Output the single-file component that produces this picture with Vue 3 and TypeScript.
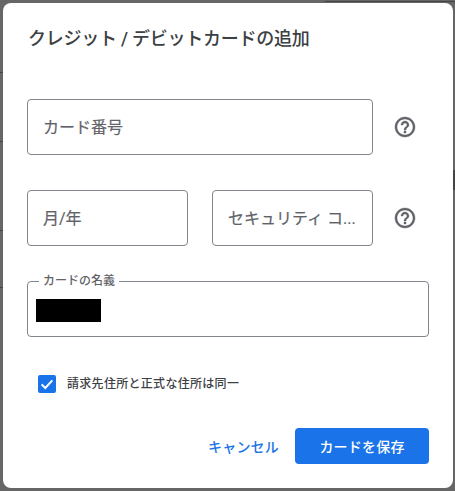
<script setup lang="ts">
const title = 'クレジット / デビットカードの追加'
</script>

<template>
  <div class="backdrop">
    <div class="dialog">
      <h2 class="title">{{ title }}</h2>

      <div class="row row-number">
        <div class="field grow"><span class="placeholder">カード番号</span></div>
        <svg class="help" viewBox="0 0 24 24" width="24" height="24" aria-hidden="true">
          <path d="M11 18h2v-2h-2v2zm1-16C6.48 2 2 6.48 2 12s4.48 10 10 10 10-4.48 10-10S17.52 2 12 2zm0 18c-4.41 0-8-3.59-8-8s3.59-8 8-8 8 3.59 8 8-3.59 8-8 8zm0-14c-2.21 0-4 1.79-4 4h2c0-1.1.9-2 2-2s2 .9 2 2c0 2-3 1.75-3 5h2c0-2.25 3-2.5 3-5 0-2.21-1.79-4-4-4z" />
        </svg>
      </div>

      <div class="row row-expiry">
        <div class="split">
          <div class="field"><span class="placeholder">月/年</span></div>
          <div class="field"><span class="placeholder">セキュリティ コ...</span></div>
        </div>
        <svg class="help" viewBox="0 0 24 24" width="24" height="24" aria-hidden="true">
          <path d="M11 18h2v-2h-2v2zm1-16C6.48 2 2 6.48 2 12s4.48 10 10 10 10-4.48 10-10S17.52 2 12 2zm0 18c-4.41 0-8-3.59-8-8s3.59-8 8-8 8 3.59 8 8-3.59 8-8 8zm0-14c-2.21 0-4 1.79-4 4h2c0-1.1.9-2 2-2s2 .9 2 2c0 2-3 1.75-3 5h2c0-2.25 3-2.5 3-5 0-2.21-1.79-4-4-4z" />
        </svg>
      </div>

      <div class="field name-field">
        <span class="float-label">カードの名義</span>
        <span class="redacted"></span>
      </div>

      <div class="check-row">
        <span class="checkbox">
          <svg viewBox="0 0 18 18" width="18" height="18" aria-hidden="true">
            <path d="M3.6 9.4l3.7 3.6 7-7.6" fill="none" stroke="#fff" stroke-width="2" />
          </svg>
        </span>
        <span class="check-label">請求先住所と正式な住所は同一</span>
      </div>

      <div class="actions">
        <button class="btn-text" type="button">キャンセル</button>
        <button class="btn-fill" type="button">カードを保存</button>
      </div>
    </div>
  </div>
</template>

<style>
html, body { margin: 0; padding: 0; background: #666; }
</style>

<style scoped>
.backdrop {
  width: 455px;
  height: 491px;
  box-sizing: border-box;
  padding: 3px 2px 3px 3px;
  background-color: #666;
  background-image:
    linear-gradient(#444, #444),
    linear-gradient(#444, #444),
    linear-gradient(#444, #444),
    linear-gradient(#444, #444),
    linear-gradient(#444, #444),
    linear-gradient(#444, #444);
  background-repeat: no-repeat;
  background-size: 3px 1px, 3px 1px, 3px 1px, 3px 1px, 155px 1px, 2px 20px;
  background-position: 0 72px, 0 141px, 0 230px, 0 287px, 325px 1px, 453px 170px;
  overflow: hidden;
  font-family: Roboto, "Noto Sans CJK JP", sans-serif;
}
.dialog {
  width: 450px;
  height: 485px;
  box-sizing: border-box;
  background: #fff;
  border-radius: 8px;
  padding: 25px 24px 24px 24px;
  display: flex;
  flex-direction: column;
}
.title {
  margin: 0;
  font-size: 18px;
  line-height: 22px;
  font-weight: 500;
  letter-spacing: -0.25px;
  color: #3c4043;
  padding-left: 1px;
}
.row { display: flex; align-items: center; gap: 20px; width: 402px; }
.row-number { margin-top: 49px; }
.row-expiry { margin-top: 35px; }
.grow { flex: 1; }
.split { flex: 1; display: grid; grid-template-columns: 161px 161px; column-gap: 24px; }
.help { flex: none; fill: #5f6368; stroke: #5f6368; stroke-width: 0.4; margin-right: 12px; }
.field {
  height: 56px;
  box-sizing: border-box;
  border: 1px solid #80868b;
  border-radius: 4px;
  display: flex;
  align-items: center;
  padding: 0 15px 3px;
  min-width: 0;
  position: relative;
}
.placeholder {
  font-size: 16px;
  color: #5f6368;
  white-space: nowrap;
  -webkit-text-stroke: 0.2px #5f6368;
}
.name-field { width: 402px; margin-top: 35px; padding: 2px 8px 0; }
.float-label {
  position: absolute;
  left: 11px;
  top: -8px;
  padding: 0 4px;
  background: #fff;
  font-size: 12px;
  line-height: 14px;
  font-weight: 500;
  color: #5f6368;
}
.redacted { display: block; width: 65px; height: 23px; background: #000; }
.check-row { display: flex; align-items: center; margin-top: 38px; padding-left: 11px; gap: 11px; }
.checkbox { width: 18px; height: 18px; border-radius: 2px; background: #1a73e8; display: block; }
.checkbox svg { display: block; }
.check-label { font-size: 12px; line-height: 18px; color: #3c4043; font-weight: 500; letter-spacing: 0.3px; }
.actions { margin-top: 35px; display: flex; justify-content: flex-end; align-items: center; width: 402px; gap: 16px; }
button { font-family: inherit; border: 0; cursor: pointer; }
.btn-text { background: none; color: #1a73e8; font-size: 14px; font-weight: 500; letter-spacing: 0.2px; padding: 0; }
.btn-fill { width: 134px; height: 36px; background: #1a73e8; color: #fff; border-radius: 4px; font-size: 14px; font-weight: 500; letter-spacing: 0.2px; }
</style>
